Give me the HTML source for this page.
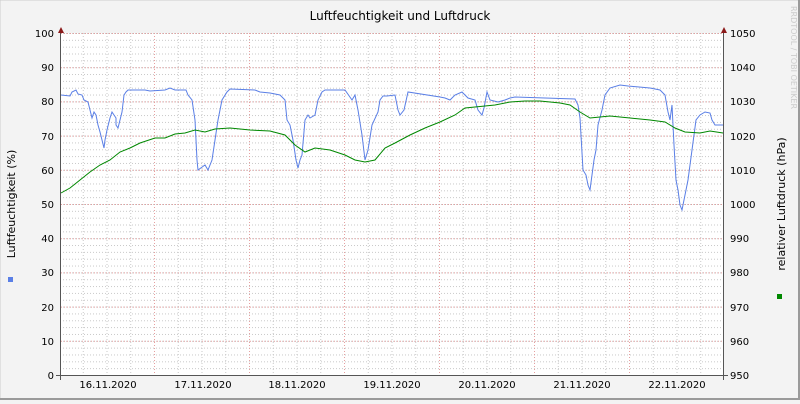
<!DOCTYPE html>
<html><head><meta charset="utf-8"><style>
html,body{margin:0;padding:0;}
body{width:800px;height:400px;overflow:hidden;background:#f3f3f3;font-family:"DejaVu Sans","Liberation Sans",sans-serif;}
</style></head><body>
<svg width="800" height="400" xmlns="http://www.w3.org/2000/svg" font-family="DejaVu Sans, Liberation Sans, sans-serif">
<defs>
<pattern id="hmin" x="0" y="33" width="800" height="6.84" patternUnits="userSpaceOnUse">
<line x1="0" y1="0.5" x2="800" y2="0.5" stroke="#c8c8c8" stroke-dasharray="1,2"/>
</pattern>
<pattern id="vmin" x="59" y="0" width="23.75" height="400" patternUnits="userSpaceOnUse">
<line x1="0.5" y1="0" x2="0.5" y2="400" stroke="#c8c8c8" stroke-dasharray="1,2"/>
</pattern>
</defs>
<rect x="0" y="0" width="800" height="400" fill="#f3f3f3"/>
<rect x="0" y="0" width="799" height="399" fill="none" stroke="#ccc"/>
<line x1="0" y1="399" x2="800" y2="399" stroke="#9a9a9a" stroke-width="2"/>
<line x1="799" y1="0" x2="799" y2="400" stroke="#9a9a9a" stroke-width="2"/>
<rect x="61" y="33" width="662" height="342" fill="#fff"/>
<rect x="61" y="33" width="662" height="342" fill="url(#hmin)"/>
<rect x="61" y="33" width="662" height="342" fill="url(#vmin)"/>
<g stroke="#e6a0a0" stroke-dasharray="1,2">
<line x1="61" y1="33.5" x2="723" y2="33.5"/><line x1="61" y1="67.7" x2="723" y2="67.7"/><line x1="61" y1="101.9" x2="723" y2="101.9"/><line x1="61" y1="136.1" x2="723" y2="136.1"/><line x1="61" y1="170.3" x2="723" y2="170.3"/><line x1="61" y1="204.5" x2="723" y2="204.5"/><line x1="61" y1="238.7" x2="723" y2="238.7"/><line x1="61" y1="272.9" x2="723" y2="272.9"/><line x1="61" y1="307.1" x2="723" y2="307.1"/><line x1="61" y1="341.3" x2="723" y2="341.3"/>
<line x1="154.5" y1="33" x2="154.5" y2="375"/><line x1="249.5" y1="33" x2="249.5" y2="375"/><line x1="344.5" y1="33" x2="344.5" y2="375"/><line x1="439.5" y1="33" x2="439.5" y2="375"/><line x1="534.5" y1="33" x2="534.5" y2="375"/><line x1="629.5" y1="33" x2="629.5" y2="375"/>
</g>
<polyline fill="none" stroke="#5a7fe6" stroke-width="1" points="61,95 70,96 72,92 76,90 78,94 82,95 84,100 88,102 90,110 92,118 94,112 96,115 98,125 100,132 102,140 104,148 105,140 107,130 110,118 112,112 114,115 116,118 116,125 118,128 120,120 122,112 124,95 126,92 128,90 145,90 150,91 165,90 170,88 175,90 186,90 188,95 192,100 195,120 197,160 198,170 205,165 208,170 212,160 215,140 218,120 222,100 227,92 230,89 255,90 260,92 270,93 280,95 285,100 287,120 290,125 293,140 296,160 298,168 300,160 302,155 305,120 308,115 310,118 315,115 318,100 322,92 325,90 345,90 352,100 355,95 358,110 362,135 365,160 368,150 372,125 378,112 380,100 383,96 387,96 395,95 398,110 400,115 404,110 408,92 440,97 445,98 450,100 455,95 462,92 468,98 475,100 478,110 482,115 484,108 487,92 490,100 498,102 505,100 510,98 515,97 575,99 578,105 580,118 583,170 586,175 588,185 590,190 592,175 594,160 596,150 598,125 602,110 605,95 610,88 620,85 628,86 650,88 660,90 665,95 668,112 670,120 672,105 674,145 676,180 678,190 680,205 682,210 684,200 688,180 692,150 696,120 700,115 705,112 710,113 712,120 715,125 723,125"/>
<polyline fill="none" stroke="#008800" stroke-width="1" points="61,193 70,188 80,180 90,172 100,165 110,160 120,152 130,148 140,143 155,138 165,138 175,134 185,133 195,130 205,132 215,129 230,128 250,130 270,131 285,135 295,145 305,152 315,148 330,150 345,155 355,160 365,162 375,160 385,148 395,143 410,135 425,128 440,122 455,115 465,108 475,107 495,105 510,102 525,101 540,101 560,103 570,105 580,112 590,118 600,117 610,116 630,118 650,120 665,122 675,128 685,132 700,133 710,131 723,133"/>
<g stroke="#555"><line x1="60.5" y1="30" x2="60.5" y2="380"/><line x1="723.5" y1="30" x2="723.5" y2="380"/><line x1="56" y1="375.5" x2="728" y2="375.5"/></g>
<polygon points="58,33 64,33 61,27" fill="#8b1a1a"/><polygon points="721,33 727,33 724,27" fill="#8b1a1a"/>
<g font-size="10" fill="#000" text-anchor="end">
<text x="54" y="37">100</text><text x="54" y="71">90</text><text x="54" y="105">80</text><text x="54" y="140">70</text><text x="54" y="174">60</text><text x="54" y="208">50</text><text x="54" y="242">40</text><text x="54" y="276">30</text><text x="54" y="311">20</text><text x="54" y="345">10</text><text x="54" y="379">0</text>
</g>
<g font-size="10" fill="#000">
<text x="730" y="37">1050</text><text x="730" y="71">1040</text><text x="730" y="105">1030</text><text x="730" y="140">1020</text><text x="730" y="174">1010</text><text x="730" y="208">1000</text><text x="730" y="242">990</text><text x="730" y="276">980</text><text x="730" y="311">970</text><text x="730" y="345">960</text><text x="730" y="379">950</text>
</g>
<g font-size="10" fill="#000" text-anchor="middle">
<text x="108" y="388">16.11.2020</text><text x="203" y="388">17.11.2020</text><text x="297" y="388">18.11.2020</text><text x="392" y="388">19.11.2020</text><text x="487" y="388">20.11.2020</text><text x="582" y="388">21.11.2020</text><text x="677" y="388">22.11.2020</text>
</g>
<text x="400" y="20" font-size="12" text-anchor="middle" fill="#000">Luftfeuchtigkeit und Luftdruck</text>
<text transform="translate(15,204) rotate(-90)" font-size="11" text-anchor="middle" fill="#000">Luftfeuchtigkeit (%)</text>
<text transform="translate(785,204) rotate(-90)" font-size="11" text-anchor="middle" fill="#000">relativer Luftdruck (hPa)</text>
<text transform="translate(791,6) rotate(90)" font-size="8" fill="#ccc">RRDTOOL / TOBI OETIKER</text>
<rect x="8" y="277" width="5" height="5" fill="#5a7fe6"/>
<rect x="777" y="294" width="5" height="5" fill="#008800"/>
</svg>
</body></html>
